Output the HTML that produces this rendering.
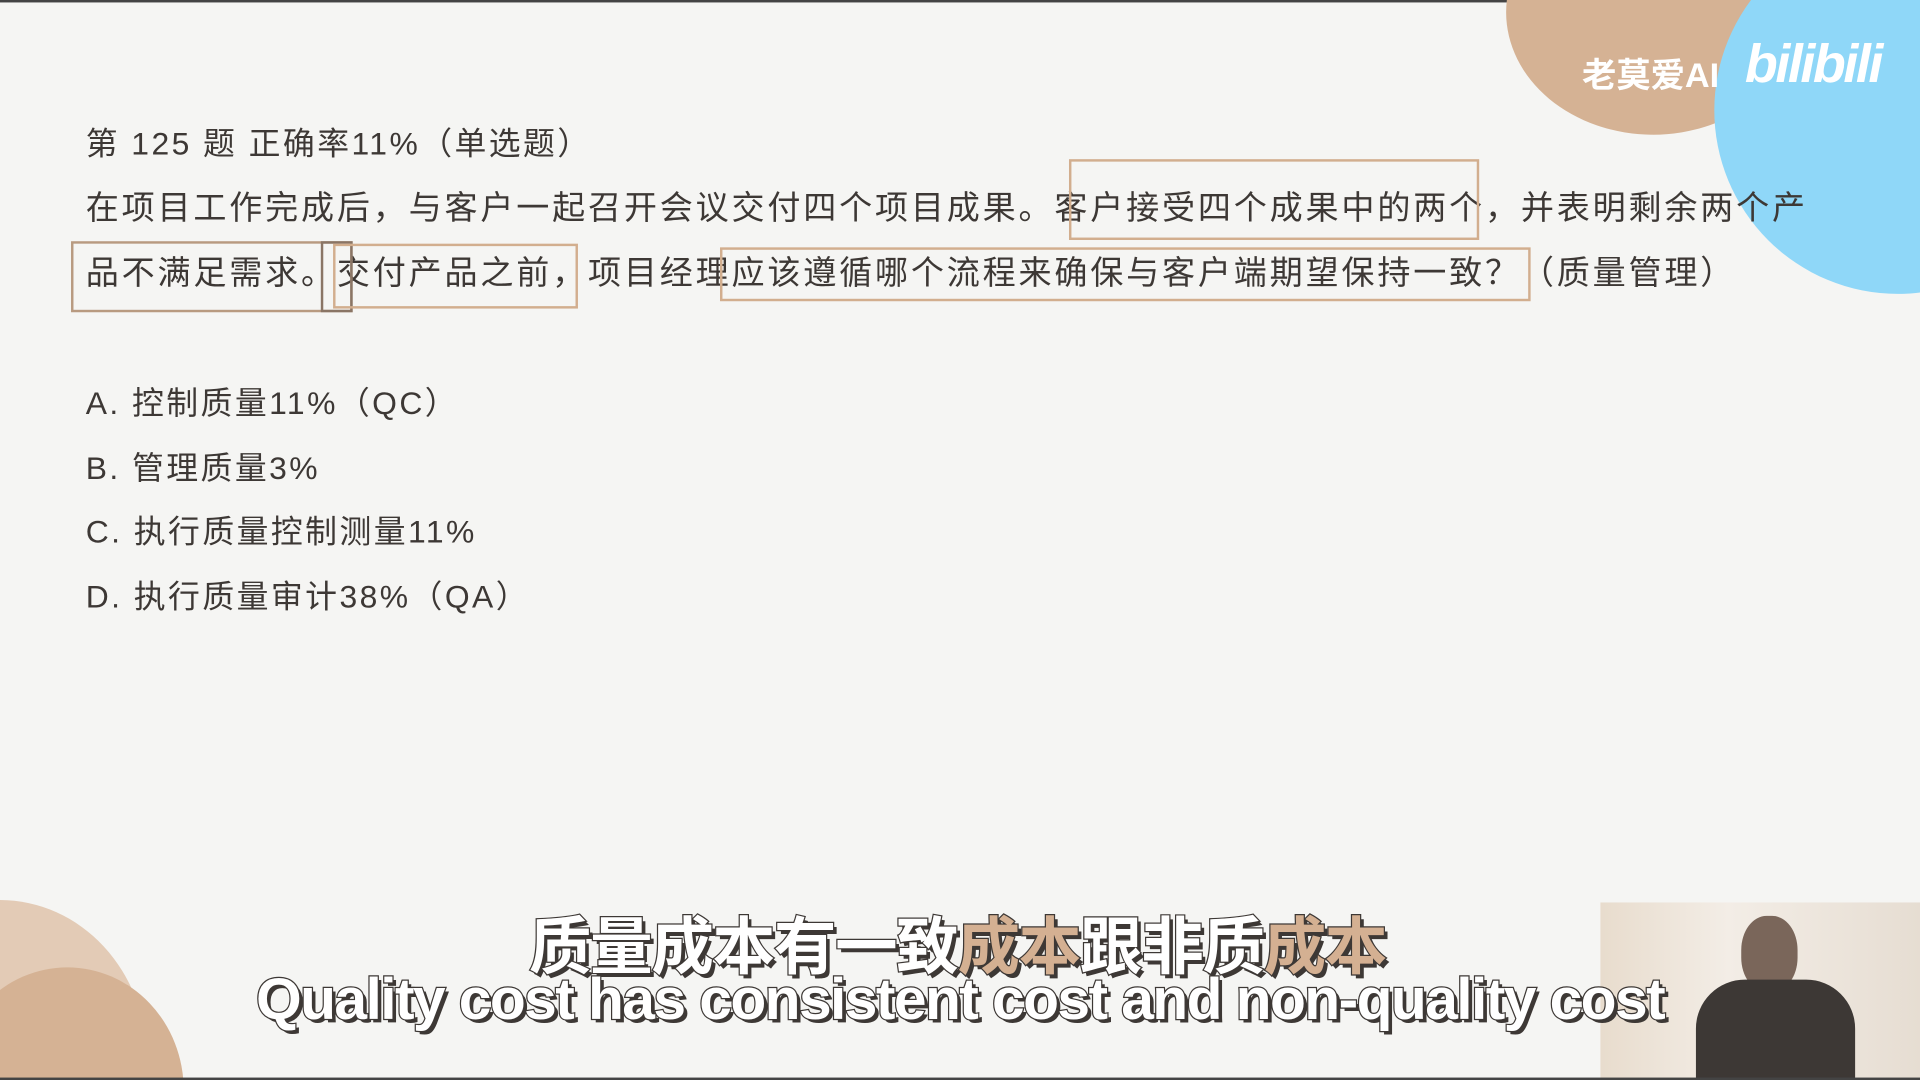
<!DOCTYPE html>
<html><head><meta charset="utf-8"><style>
html,body{margin:0;padding:0;width:1920px;height:1080px;overflow:hidden;background:#f5f5f3}
#w{position:absolute;left:0;top:0;width:1568px;height:882px;transform:scale(1.2245);transform-origin:0 0;overflow:hidden;background:#f5f5f3;font-family:"Liberation Sans","Noto Sans CJK SC",sans-serif;color:#3d3835}
.t{position:absolute;left:70px;font-size:26px;white-space:nowrap;letter-spacing:2px;line-height:30px}
.p{font-size:27px;letter-spacing:2.3px}
.b{position:absolute;border:2px solid #d2ae8e;box-sizing:border-box}
.sub{position:absolute;left:0;width:1568px;text-align:center;font-weight:bold;color:#fff;white-space:nowrap;-webkit-text-stroke:2px #3d3835;paint-order:stroke fill;text-shadow:3px 3px 0 #3d3835}
.sub span{color:#d4b092}
</style></head><body><div id="w">
<div style="position:absolute;left:0;top:0;width:1568px;height:2px;background:#444"></div>
<div style="position:absolute;left:1230px;top:-90px;width:240px;height:200px;border-radius:50%;background:#d5b294"></div>
<div style="position:absolute;left:1400px;top:-60px;width:300px;height:300px;border-radius:50%;background:#8fd7f8"></div>
<div style="position:absolute;left:1292px;top:40px;font-size:28px;font-weight:bold;color:#fff">老莫爱AI</div>
<div style="position:absolute;left:1425px;top:28px;font-size:44px;font-weight:bold;color:#fff;font-style:italic;letter-spacing:-2px">bilibili</div>
<div style="position:absolute;left:-120px;top:735px;width:240px;height:260px;border-radius:50%;background:#e3cbb6"></div>
<div style="position:absolute;left:-40px;top:790px;width:190px;height:200px;border-radius:50%;background:#d5b294"></div>
<div class="t" style="top:102px">第 125 题 正确率11%（单选题）</div>
<div class="t p" style="top:155px">在项目工作完成后，与客户一起召开会议交付四个项目成果。客户接受四个成果中的两个，并表明剩余两个产</div>
<div class="t p" style="top:208px">品不满足需求。交付产品之前，项目经理应该遵循哪个流程来确保与客户端期望保持一致？（质量管理）</div>
<div class="b" style="left:873px;top:130px;width:335px;height:66px"></div>
<div class="b" style="left:58px;top:197px;width:230px;height:58px;border-color:#b89a80"></div>
<div class="b" style="left:262px;top:197px;width:26px;height:58px;border-color:#8a7565"></div>
<div class="b" style="left:272px;top:199px;width:200px;height:53px"></div>
<div class="b" style="left:588px;top:202px;width:662px;height:44px"></div>
<div class="t" style="top:314px">A. 控制质量11%（QC）</div>
<div class="t" style="top:367px">B. 管理质量3%</div>
<div class="t" style="top:419px">C. 执行质量控制测量11%</div>
<div class="t" style="top:472px">D. 执行质量审计38%（QA）</div>
<div style="position:absolute;left:1307px;top:737px;width:261px;height:145px;background:linear-gradient(90deg,#e8dccd,#f3ede6 40%,#e6ddd2)"></div>
<div style="position:absolute;left:1422px;top:748px;width:46px;height:62px;border-radius:45%;background:#7a665a"></div>
<div style="position:absolute;left:1385px;top:800px;width:130px;height:82px;border-radius:40px 40px 0 0;background:#3d3835"></div>
<div class="sub" style="top:732px;font-size:51px;letter-spacing:-1px;left:-2px">质量成本有一致<span>成本</span>跟非质<span>成本</span></div>
<div class="sub" style="top:789px;font-size:48px;letter-spacing:-1.3px;left:0px">Quality cost has consistent cost and non-quality cost</div>
<div style="position:absolute;left:0;top:880px;width:1568px;height:2px;background:#444"></div>
</div></body></html>
